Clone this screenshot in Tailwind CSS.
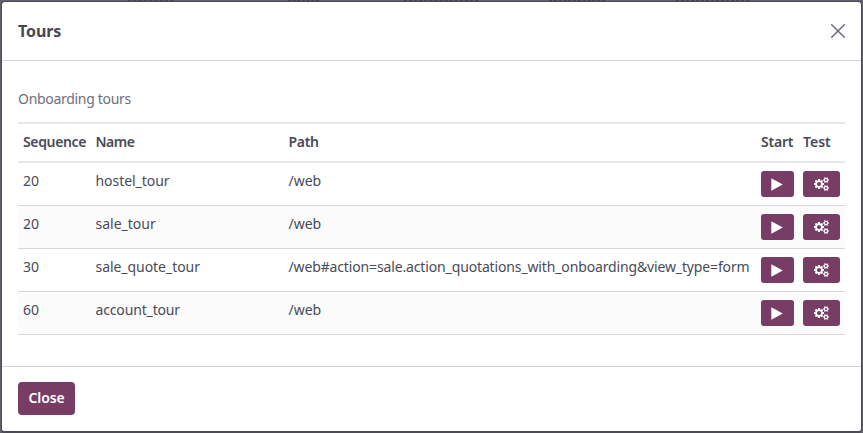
<!DOCTYPE html>
<html lang="en">
<head>
<meta charset="utf-8">
<title>Tours</title>
<script src="https://cdn.jsdelivr.net/npm/@tailwindcss/browser@4"></script>
</head>
<body class="h-[433px] w-[863px] overflow-hidden bg-[#64616f] p-px font-['Noto_Sans',sans-serif] text-[14px] leading-[21px] text-[#4a4a57]">
<svg class="hidden">
  <symbol id="play" viewBox="0 0 12 13"><path d="M.3.7v11.6q0 .5.5.3L11.3 6.8q.5-.3 0-.6L.8.4Q.3.2.3.7z" fill="currentColor"/></symbol>
  <symbol id="cogs" viewBox="0 0 1920 1792"><path fill="currentColor" d="M896 896q0-106-75-181t-181-75-181 75-75 181 75 181 181 75 181-75 75-181zm768 512q0-52-38-90t-90-38-90 38-38 90q0 53 37.500 90.500t90.500 37.500 90.500-37.500 37.500-90.500zm0-1024q0-52-38-90t-90-38-90 38-38 90q0 53 37.500 90.500t90.500 37.500 90.500-37.500 37.500-90.500zm-384 421v185q0 10-7 19.500t-16 10.500l-155 24q-11 35-32 76 34 48 90 115 7 11 7 20 0 12-7 19-23 30-82.500 89.500t-78.500 59.500q-11 0-21-7l-115-90q-37 19-77 31-11 108-23 155-7 24-30 24h-186q-11 0-20-7.500t-10-17.500l-23-153q-34-10-75-31l-118 89q-7 7-20 7-11 0-21-8-144-133-144-160 0-9 7-19 10-14 41-53t47-61q-23-44-35-82l-152-24q-10-1-17-9.500t-7-19.500v-185q0-10 7-19.500t16-10.500l155-24q11-35 32-76-34-48-90-115-7-11-7-20 0-12 7-20 22-30 82-89t79-59q11 0 21 7l115 90q34-18 77-32 11-108 23-154 7-24 30-24h186q11 0 20 7.500t10 17.500l23 153q34 10 75 31l118-89q8-7 20-7 11 0 21 8 144 133 144 160 0 8-7 19-12 16-42 54t-45 60q23 48 34 82l152 23q10 2 17 10.500t7 19.500zm640 533v140q0 16-149 31-12 27-30 52 51 113 51 138 0 4-4 7-122 71-124 71-8 0-46-47t-52-68q-20 2-30 2t-30-2q-14 21-52 68t-46 47q-2 0-124-71-4-3-4-7 0-25 51-138-18-25-30-52-149-15-149-31v-140q0-16 149-31 13-29 30-52-51-113-51-138 0-4 4-7 4-2 35-20t59-34 30-16q8 0 46 46.500t52 67.500q20-2 30-2t30 2q51-71 92-112l6-2q4 0 124 70 4 3 4 7 0 25-51 138 17 23 30 52 149 15 149 31zm0-1024v140q0 16-149 31-12 27-30 52 51 113 51 138 0 4-4 7-122 71-124 71-8 0-46-47t-52-68q-20 2-30 2t-30-2q-14 21-52 68t-46 47q-2 0-124-71-4-3-4-7 0-25 51-138-18-25-30-52-149-15-149-31v-140q0-16 149-31 13-29 30-52-51-113-51-138 0-4 4-7 4-2 35-20t59-34 30-16q8 0 46 46.500t52 67.500q20-2 30-2t30 2q51-71 92-112l6-2q4 0 124 70 4 3 4 7 0 25-51 138 17 23 30 52 149 15 149 31z"/></symbol>
</svg>
<!-- Remnants of the dimmed page's labels above the dialog -->
<div class="absolute left-[128px] top-0 h-px w-[45px] border-t border-dashed border-[#45434d]"></div>
<div class="absolute left-[288px] top-0 h-px w-[31px] border-t border-dashed border-[#45434d]"></div>
<div class="absolute left-[404px] top-0 h-px w-[74px] border-t border-dashed border-[#45434d]"></div>
<div class="absolute left-[549px] top-0 h-px w-[56px] border-t border-dashed border-[#45434d]"></div>
<div class="absolute left-[676px] top-0 h-px w-[73px] border-t border-dashed border-[#45434d]"></div>
<div class="flex h-[432px] w-[861px] flex-col rounded-[4px] border border-b-2 border-[#4b4955] bg-white">
  <header class="flex h-[59px] shrink-0 items-center justify-between border-b border-[#d3d4d8] pr-[16px] pl-[16px]">
    <h1 class="text-[16px] font-bold tracking-[-0.1px] text-[#46464f]">Tours</h1>
    <svg class="h-[14px] w-[14px]" viewBox="0 0 14 14" fill="none" stroke="#6c6b79" stroke-width="1.5" stroke-linecap="round"><path d="M.7.7l12.600 12.600M13.300.7L.7 13.300"/></svg>
  </header>
  <main class="h-[305px] shrink-0 px-[16px] pt-[27px]">
    <div class="h-[34px] tracking-[-0.3px] text-[#6f6e7b]">Onboarding tours</div>
    <div class="grid h-[41px] grid-cols-[72.5px_193px_472.5px_42px_auto] border-y-2 border-[#e7e6eb] pt-[7px] pl-[5px] font-semibold">
      <div class="tracking-[-0.35px]">Sequence</div><div class="tracking-[-0.5px]">Name</div><div class="tracking-[-0.3px]">Path</div><div class="tracking-[-0.2px]">Start</div><div>Test</div>
    </div>
    <div class="grid h-[43px] grid-cols-[72.5px_193px_472.5px_42px_auto] border-b border-[#d7d8dc] pt-[7px] pl-[5px]">
      <div>20</div><div class="tracking-[-0.05px]">hostel_tour</div><div>/web</div>
      <button class="mt-px flex h-[26px] w-[33px] items-center justify-center rounded-[3px] bg-[#783d65] pr-px text-white"><svg class="h-[13px] w-[12px]"><use href="#play"/></svg></button>
      <button class="mt-px flex h-[26px] w-[37px] items-center justify-center rounded-[3px] bg-[#783d65] text-white"><svg class="h-[14px] w-[15px]"><use href="#cogs"/></svg></button>
    </div>
    <div class="grid h-[43px] grid-cols-[72.5px_193px_472.5px_42px_auto] border-b border-[#d7d8dc] bg-[#fbfbfb] pt-[7px] pl-[5px]">
      <div>20</div><div>sale_tour</div><div>/web</div>
      <button class="mt-px flex h-[26px] w-[33px] items-center justify-center rounded-[3px] bg-[#783d65] pr-px text-white"><svg class="h-[13px] w-[12px]"><use href="#play"/></svg></button>
      <button class="mt-px flex h-[26px] w-[37px] items-center justify-center rounded-[3px] bg-[#783d65] text-white"><svg class="h-[14px] w-[15px]"><use href="#cogs"/></svg></button>
    </div>
    <div class="grid h-[43px] grid-cols-[72.5px_193px_472.5px_42px_auto] border-b border-[#d7d8dc] pt-[7px] pl-[5px]">
      <div>30</div><div class="tracking-[-0.05px]">sale_quote_tour</div><div class="tracking-[-0.14px]">/web#action=sale.action_quotations_with_onboarding&amp;view_type=form</div>
      <button class="mt-px flex h-[26px] w-[33px] items-center justify-center rounded-[3px] bg-[#783d65] pr-px text-white"><svg class="h-[13px] w-[12px]"><use href="#play"/></svg></button>
      <button class="mt-px flex h-[26px] w-[37px] items-center justify-center rounded-[3px] bg-[#783d65] text-white"><svg class="h-[14px] w-[15px]"><use href="#cogs"/></svg></button>
    </div>
    <div class="grid h-[43px] grid-cols-[72.5px_193px_472.5px_42px_auto] border-b border-[#d7d8dc] bg-[#fbfbfb] pt-[7px] pl-[5px]">
      <div>60</div><div class="tracking-[-0.15px]">account_tour</div><div>/web</div>
      <button class="mt-px flex h-[26px] w-[33px] items-center justify-center rounded-[3px] bg-[#783d65] pr-px text-white"><svg class="h-[13px] w-[12px]"><use href="#play"/></svg></button>
      <button class="mt-px flex h-[26px] w-[37px] items-center justify-center rounded-[3px] bg-[#783d65] text-white"><svg class="h-[14px] w-[15px]"><use href="#cogs"/></svg></button>
    </div>
  </main>
  <footer class="border-t border-[#d3d4d8] px-[16px] pt-[15px]">
    <button class="h-[33px] w-[57px] rounded-[4px] bg-[#783d65] pb-[2px] font-semibold tracking-[-0.15px] text-white">Close</button>
  </footer>
</div>
</body>
</html>
